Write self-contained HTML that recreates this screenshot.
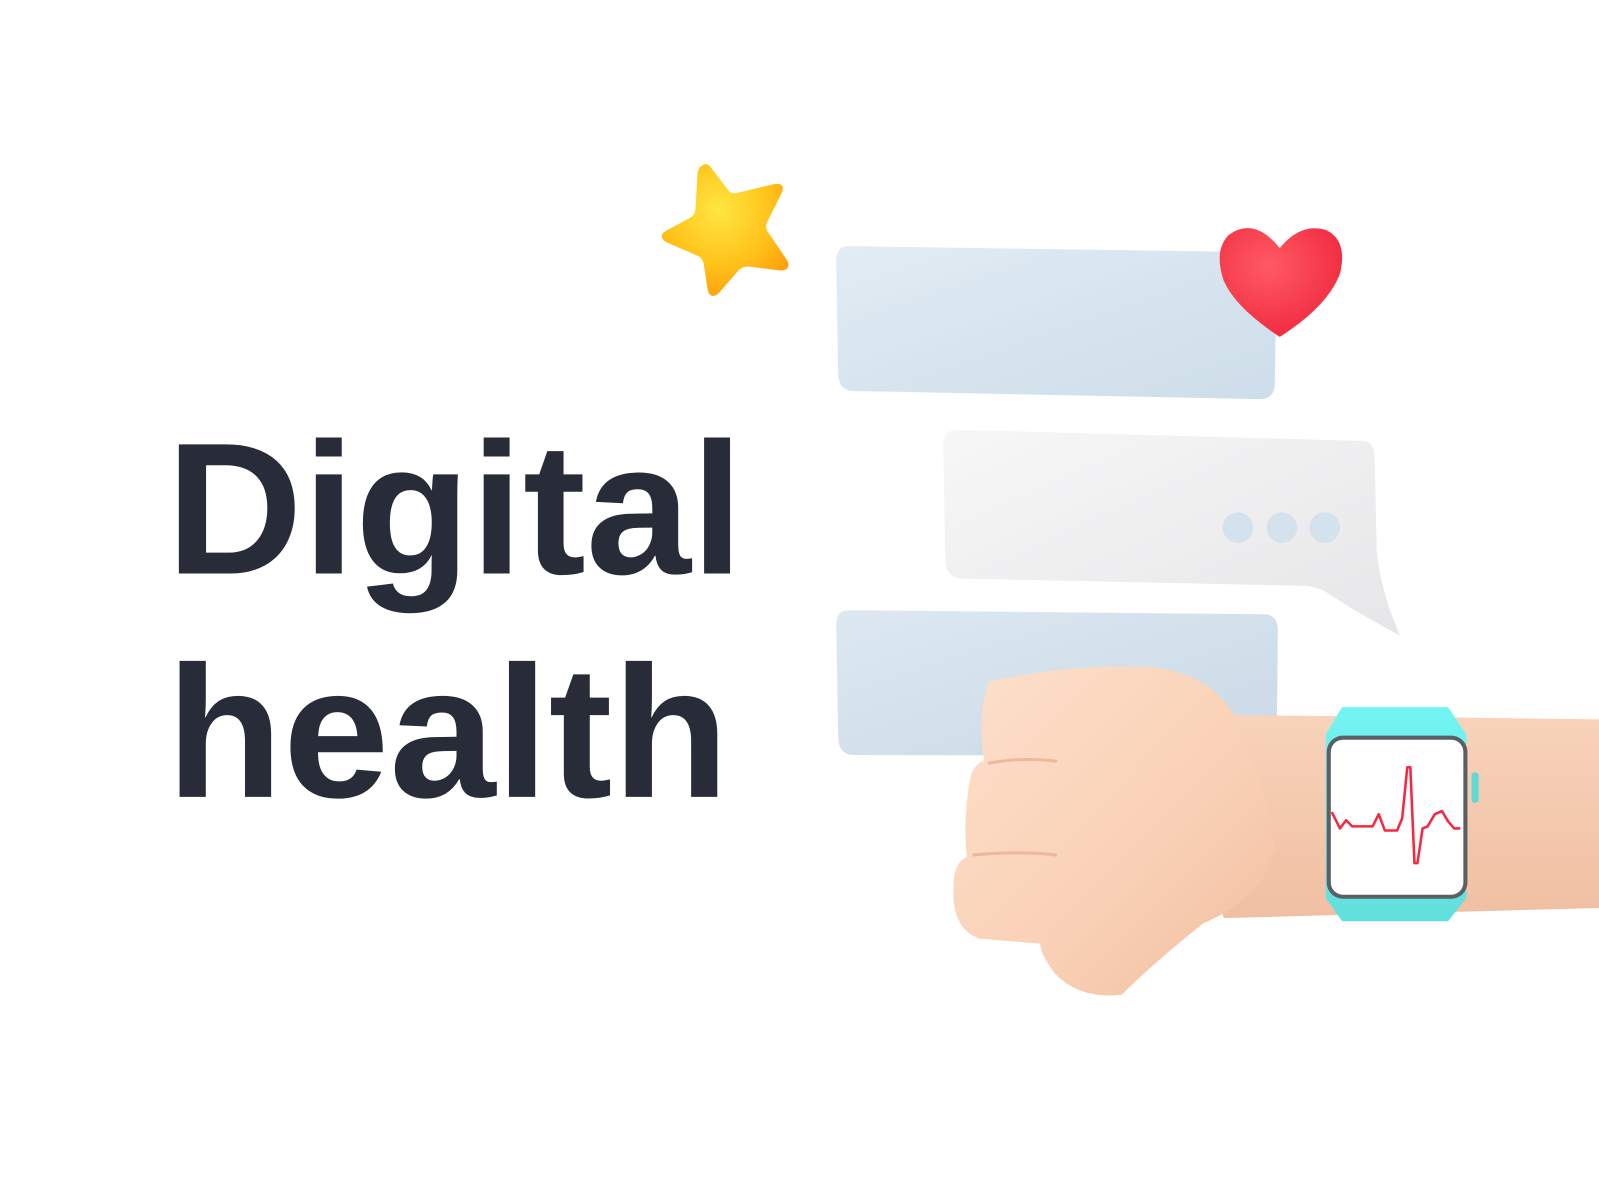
<!DOCTYPE html>
<html><head><meta charset="utf-8"><style>
html,body{margin:0;padding:0;background:#fff;width:1599px;height:1200px;overflow:hidden}
svg{display:block}
</style></head><body>
<svg width="1599" height="1200" viewBox="0 0 1568 1176" xmlns="http://www.w3.org/2000/svg">
<defs>
<linearGradient id="b1" x1="0" y1="0" x2="1" y2="1"><stop offset="0" stop-color="#e2ecf4"/><stop offset="1" stop-color="#cddde9"/></linearGradient>
<linearGradient id="b2" x1="0" y1="0" x2="1" y2="1"><stop offset="0" stop-color="#f7f7f8"/><stop offset="1" stop-color="#e6e6e8"/></linearGradient>
<linearGradient id="b3" x1="0" y1="0" x2="1" y2="1"><stop offset="0" stop-color="#dde8f1"/><stop offset="1" stop-color="#c9d9e6"/></linearGradient>
<radialGradient id="star" cx="0.45" cy="0.35" r="0.7"><stop offset="0" stop-color="#ffe640"/><stop offset="0.6" stop-color="#ffc21a"/><stop offset="1" stop-color="#ff9d0a"/></radialGradient>
<radialGradient id="heart" cx="0.4" cy="0.35" r="0.7"><stop offset="0" stop-color="#ff5a63"/><stop offset="1" stop-color="#f0283f"/></radialGradient>
<linearGradient id="skin" x1="0" y1="0" x2="1" y2="1"><stop offset="0" stop-color="#fde0cb"/><stop offset="0.6" stop-color="#f9d0b5"/><stop offset="1" stop-color="#f0bc9e"/></linearGradient>
<linearGradient id="arm" x1="0" y1="0" x2="0" y2="1"><stop offset="0" stop-color="#f8d3ba"/><stop offset="1" stop-color="#f0bfa2"/></linearGradient>
<linearGradient id="band" x1="0" y1="0" x2="0" y2="1"><stop offset="0" stop-color="#72f5f3"/><stop offset="1" stop-color="#62dfdc"/></linearGradient>
</defs>

<g font-family="'Liberation Sans',sans-serif" font-weight="700" fill="#282c38" font-size="184">
<text x="163" y="562" textLength="566" lengthAdjust="spacingAndGlyphs">Digital</text>
<text x="163" y="781" textLength="552" lengthAdjust="spacingAndGlyphs">health</text>
</g>

<path d="M832 241 L1238 247 Q1252 248 1252 262 L1250 378 Q1249 391 1235 391 L836 383 Q823 382 822 368 L820 256 Q820 241 832 241Z" fill="url(#b1)"/>
<path d="M938 421 L1336 432 Q1348 433 1348 448 L1350 540 Q1354 580 1373 623 Q1330 600 1300 580 Q1290 574 1275 574 L943 567 Q928 566 927 550 L925 436 Q925 421 938 421Z" fill="url(#b2)"/>
<circle cx="1214" cy="517" r="15" fill="#d3e2ed"/>
<circle cx="1257" cy="517" r="15" fill="#d3e2ed"/>
<circle cx="1299" cy="517" r="15" fill="#d3e2ed"/>
<path d="M832 598 L1240 602 Q1253 603 1253 617 L1252 728 Q1251 741 1238 741 L836 740 Q823 739 822 724 L820 612 Q820 598 832 598Z" fill="url(#b3)"/>

<path d="M688 162 Q694 158 698 165 L714 186 Q717 190 722 189 L760 180 Q770 179 767 188 L752 218 Q750 223 753 227 L772 255 Q776 264 766 265 L734 261 Q728 261 724 265 L705 287 Q697 294 694 284 L690 258 Q689 252 683 250 L653 237 Q645 231 653 226 L677 213 Q682 210 682 204 L684 170 Q685 164 688 162Z" fill="url(#star)"/>

<path d="M1255 330 Q1212 302 1200 275 Q1190 245 1205 230 Q1230 212 1255 243 Q1275 218 1300 225 Q1322 235 1314 268 Q1302 300 1255 330Z" fill="url(#heart)"/>

<path d="M1150 700 L1568 705 L1568 890 L1200 900 Z" fill="url(#arm)"/>
<path d="M970 668 Q1050 650 1130 654 Q1185 660 1210 700 Q1240 760 1250 830 Q1240 880 1180 905 Q1130 945 1100 975 Q1060 980 1035 955 Q1020 935 1020 925 L960 920 Q933 910 935 870 Q935 845 948 840 Q944 800 952 760 Q955 750 965 745 Q958 700 970 668Z" fill="url(#skin)"/>
<path d="M970 748 Q1000 742 1035 746" stroke="#eeb89c" stroke-width="3" fill="none" stroke-linecap="round"/>
<path d="M955 838 Q1000 834 1035 838" stroke="#eeb89c" stroke-width="3" fill="none" stroke-linecap="round"/>

<path d="M1316 693 L1420 693 L1438 720 L1438 880 L1420 903 L1316 903 L1300 880 L1300 720 Z" fill="url(#band)"/>
<rect x="1443" y="757" width="7" height="30" rx="3" fill="#5fd8d6"/>
<rect x="1301" y="721" width="138" height="160" rx="16" fill="#5a5f64"/>
<rect x="1305" y="725" width="130" height="152" rx="12" fill="#fff"/>
<path d="M1306 796 L1314 812 L1320 804 L1326 810 L1346 810 L1352 798 L1358 814 L1370 814 L1375 802 L1380 752 L1383 752 L1387 846 L1390 846 L1395 812 L1400 810 L1407 798 L1414 795 L1420 805 L1426 812 L1432 812" stroke="#f72741" stroke-width="2.5" fill="none" stroke-linejoin="round"/>
</svg>
</body></html>
